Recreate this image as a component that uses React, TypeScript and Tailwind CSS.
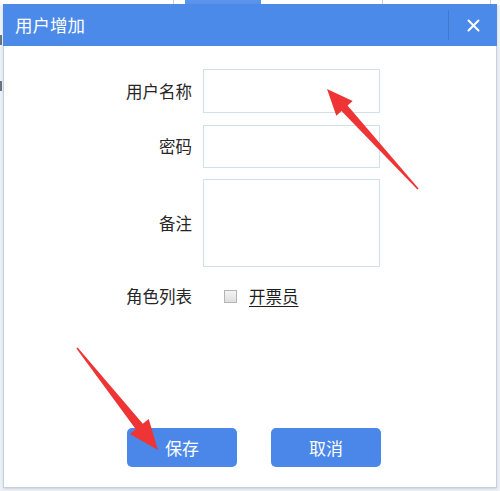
import React from 'react';

// 用户增加 dialog, shown over the user list page
const font = { fontFamily: '"Noto Sans CJK SC", "Microsoft YaHei", sans-serif' };

function FormRow({ label, children }: { label: string; children: React.ReactNode }) {
  return (
    <div className="flex items-center">
      <div className="w-[70px] text-right text-[16.5px] leading-none text-[#262626] whitespace-nowrap">{label}</div>
      <div className="ml-[11px]">{children}</div>
    </div>
  );
}

function RedArrow({ points }: { points: string }) {
  return <polygon points={points} fill="#ee3434" />;
}

export default function App() {
  return (
    <div className="relative w-[500px] h-[491px] overflow-hidden bg-[#eef1f5]" style={font}>
      {/* page underneath the dialog */}
      <div className="absolute inset-x-0 top-0 h-[5px] bg-white">
        <div className="absolute top-0 left-[173px] h-full w-px bg-[#c9d2dc]" />
        <div className="absolute top-0 left-[185px] h-full w-[76px] bg-[#5b94ea]" />
        <div className="absolute top-0 left-[382px] h-full w-px bg-[#c9d2dc]" />
        <div className="absolute top-0 left-[490px] h-full w-px bg-[#c9d2dc]" />
      </div>
      <div className="absolute left-0 top-[35px] w-[2px] h-[10px] bg-[#6b7482]" />
      <div className="absolute left-0 top-[81px] w-[2px] h-[10px] bg-[#6b7482]" />

      {/* dialog */}
      <div className="absolute left-[3px] top-[4px] w-[494px] h-[484px] bg-white border border-[#c3d1e2] shadow-sm flex flex-col">
        <div className="h-[42px] shrink-0 bg-[#4c8aea] flex items-center -mx-px -mt-px">
          <div className="pl-[12px] text-[17.5px] text-white leading-none">用户增加</div>
          <div className="ml-auto h-[30px] w-px bg-[#4379cf]" />
          <button className="w-[48px] h-full flex items-center justify-center text-white">
            <svg width="13" height="13" viewBox="0 0 13 13" fill="none" stroke="white" strokeWidth="2" strokeLinecap="round">
              <path d="M1.5 1.5 L11.5 11.5 M11.5 1.5 L1.5 11.5" />
            </svg>
          </button>
        </div>

        <div className="pl-[118px] pt-[23px] flex flex-col">
          <FormRow label="用户名称">
            <input className="block w-[177px] h-[44px] border border-[#cfe1ea] outline-none px-2" />
          </FormRow>
          <div className="mt-[12px]">
            <FormRow label="密码">
              <input type="password" className="block w-[177px] h-[43px] border border-[#cfe1ea] outline-none px-2" />
            </FormRow>
          </div>
          <div className="mt-[11px]">
            <FormRow label="备注">
              <textarea className="block w-[177px] h-[88px] border border-[#cfe1ea] outline-none resize-none p-2" />
            </FormRow>
          </div>
          <div className="mt-[21px]">
            <FormRow label="角色列表">
              <label className="flex items-center ml-[21px]">
                <span className="w-[13px] h-[13px] border border-[#b5b5b5] bg-gradient-to-b from-[#f4f4f4] to-[#dedede]" />
                <span className="ml-[12px] text-[16.5px] leading-none text-[#1e1e1e] underline underline-offset-[3px]">开票员</span>
              </label>
            </FormRow>
          </div>
        </div>

        <div className="mt-auto mb-[20px] pl-[123px] flex gap-[34px]">
          <button className="w-[110px] h-[39px] rounded-[5px] bg-[#4a87e9] text-white text-[17px]">保存</button>
          <button className="w-[110px] h-[39px] rounded-[5px] bg-[#4a87e9] text-white text-[17px]">取消</button>
        </div>
      </div>

      {/* annotation arrows */}
      <svg className="absolute inset-0 pointer-events-none" width="500" height="491" viewBox="0 0 500 491">
        <RedArrow points="327,89 352.7,100.9 347.5,105.6 418.6,188.5 417.4,189.5 341.5,111 336.3,115.7" />
        <RedArrow points="158,450 129.9,434 135.8,429.3 76.4,348.5 77.6,347.5 142.8,423.7 148.7,419" />
      </svg>
    </div>
  );
}
